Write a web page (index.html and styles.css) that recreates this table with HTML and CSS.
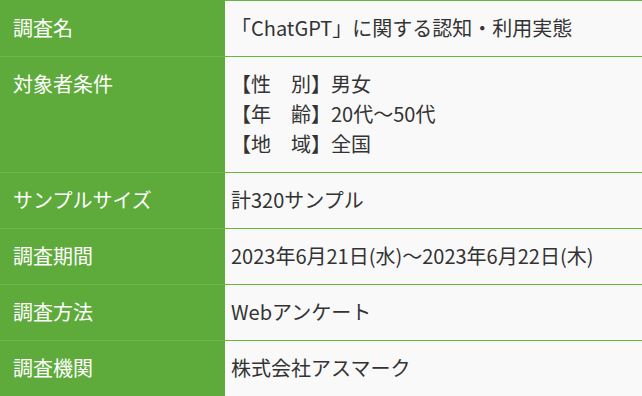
FILE: index.html
```html
<!DOCTYPE html>
<html lang="ja">
<head>
<meta charset="utf-8">
<title>調査概要</title>
<link rel="stylesheet" href="styles.css">
</head>
<body>
<table class="survey">
  <tbody>
    <tr>
      <th>調査名</th>
      <td>「ChatGPT」に関する認知・利用実態</td>
    </tr>
    <tr>
      <th>対象者条件</th>
      <td>【性　別】男女<br>【年　齢】20代～50代<br>【地　域】全国</td>
    </tr>
    <tr>
      <th>サンプルサイズ</th>
      <td>計320サンプル</td>
    </tr>
    <tr>
      <th>調査期間</th>
      <td>2023年6月21日(水)～2023年6月22日(木)</td>
    </tr>
    <tr>
      <th>調査方法</th>
      <td>Webアンケート</td>
    </tr>
    <tr>
      <th>調査機関</th>
      <td>株式会社アスマーク</td>
    </tr>
  </tbody>
</table>
</body>
</html>
```

FILE: styles.css
```css
html, body {
  margin: 0;
  padding: 0;
  background: #f9f9f9;
}

.survey {
  width: 100%;
  border-collapse: collapse;
  font-family: "Noto Sans CJK JP", "Noto Sans", sans-serif;
  font-size: 20px;
  line-height: 30px;
}

.survey th,
.survey td {
  padding: 12px 0 13px;
  vertical-align: top;
  text-align: left;
}

.survey th {
  width: 212px;
  padding-left: 13px;
  background: #5eab3c;
  color: #ffffff;
  font-weight: normal;
  border-top: 1px solid #6db54d;
}

.survey td {
  padding-left: 6px;
  padding-right: 6px;
  color: #333333;
  background: #f9f9f9;
  border-top: 1px solid #66b83a;
}

.survey tr:first-child th {
  border-top-color: #5eab3c;
}
```
